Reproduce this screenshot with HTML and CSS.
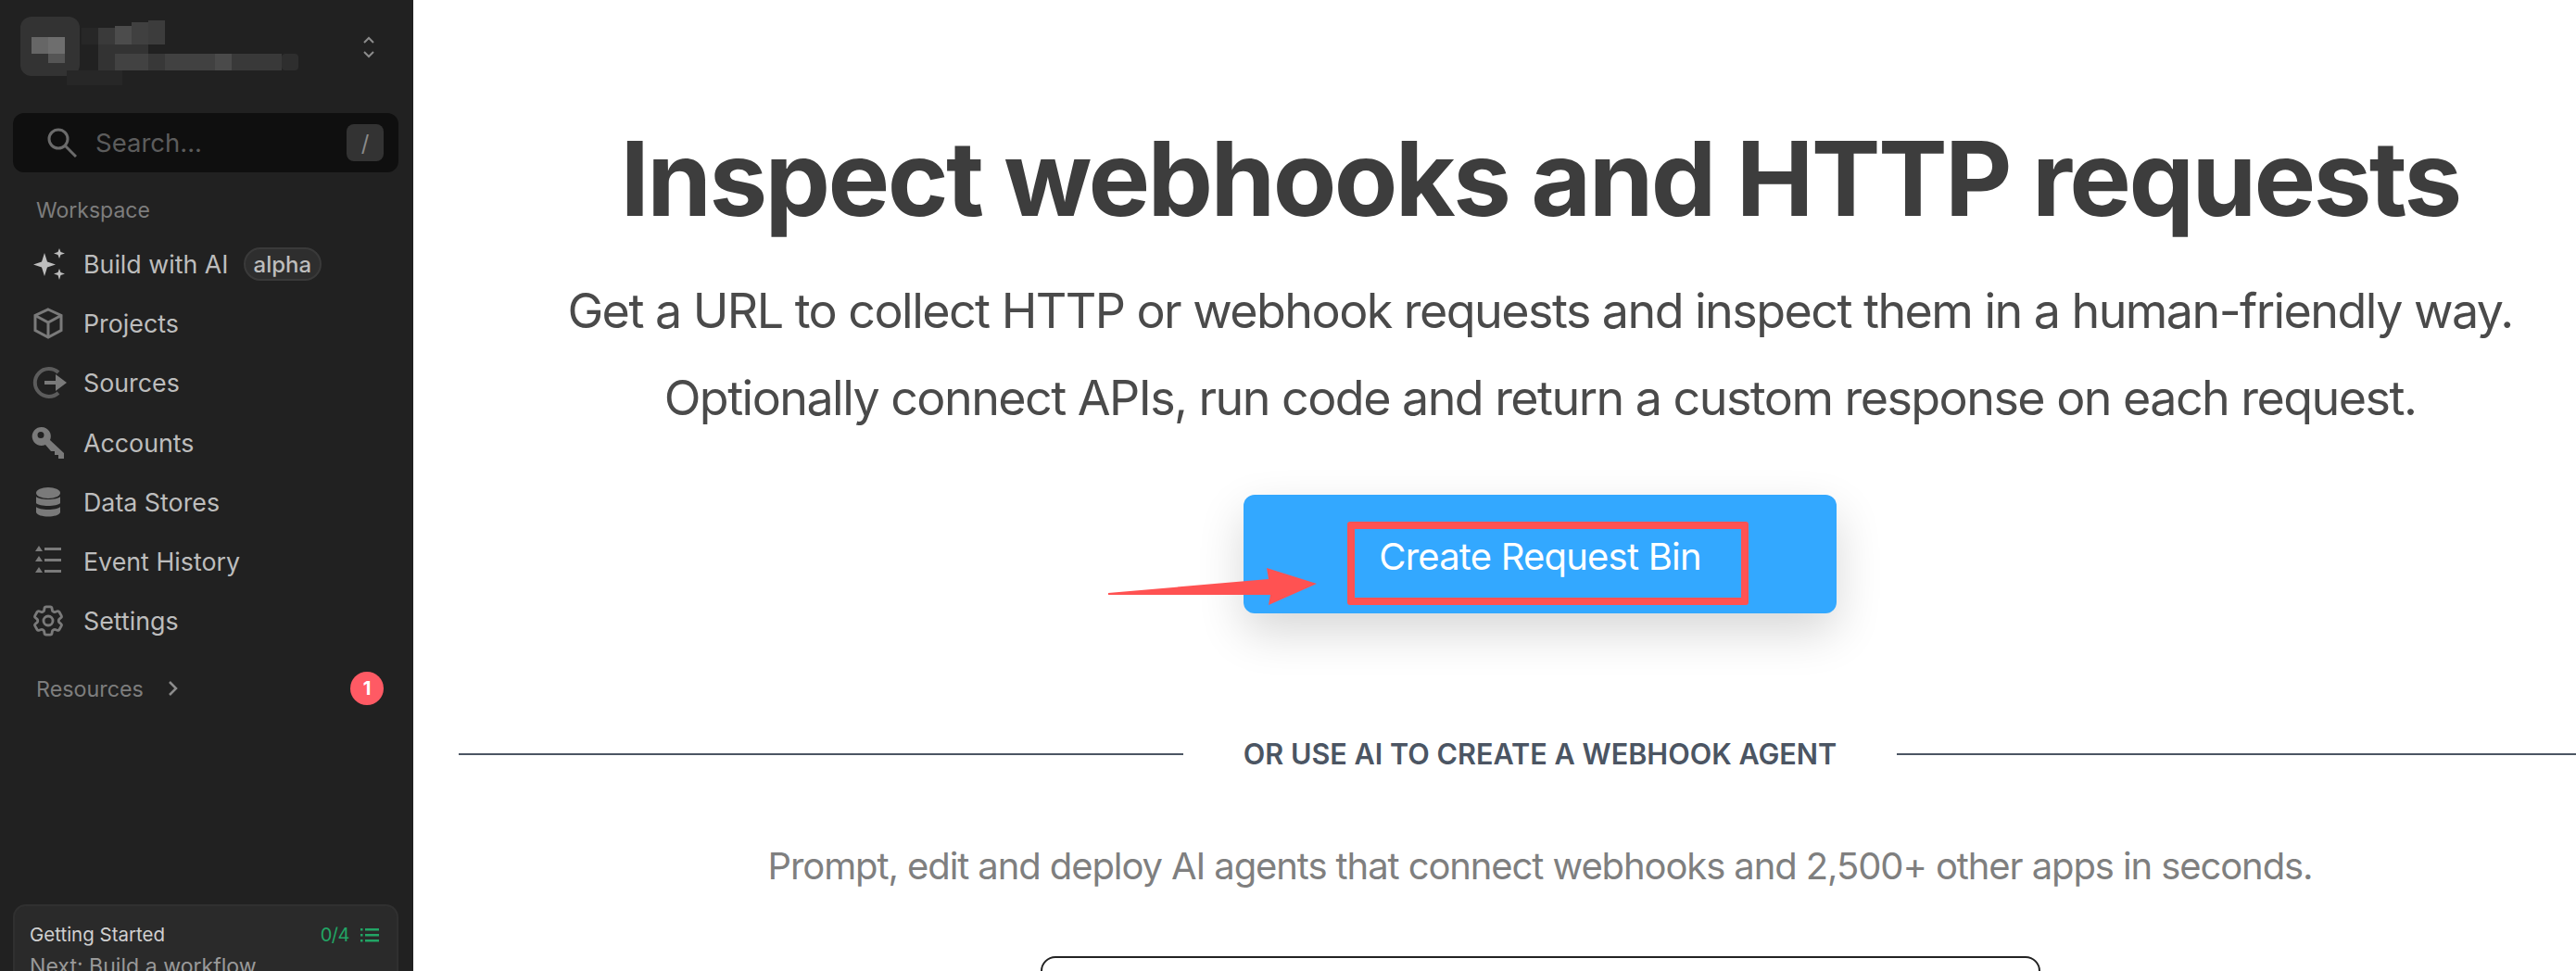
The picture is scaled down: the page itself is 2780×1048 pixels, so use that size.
FILE: index.html
```html
<!DOCTYPE html>
<html lang="en">
<head>
  <meta charset="UTF-8">
  <title>Inspect webhooks and HTTP requests</title>
  <link rel="stylesheet" href="styles.css">
</head>
<body>
  <div class="page">
    <aside class="sidebar">
      <div class="org">
        <svg class="org-mosaic" width="330" height="80" viewBox="0 0 330 80">
          <rect x="0" y="0" width="64" height="64" rx="12" fill="#333"/>
          <rect x="12" y="22" width="18" height="18" fill="#666"/>
          <rect x="30" y="22" width="18" height="18" fill="#6e6e6e"/>
          <rect x="30" y="40" width="18" height="10" fill="#555"/>
          <rect x="66" y="12" width="18" height="18" fill="#272727"/>
          <rect x="84" y="12" width="18" height="18" fill="#3a3a3a"/>
          <rect x="102" y="10" width="18" height="20" fill="#4c4c4c"/>
          <rect x="120" y="6" width="18" height="24" fill="#404040"/>
          <rect x="138" y="4" width="18" height="26" fill="#3c3c3c"/>
          <rect x="84" y="30" width="54" height="18" fill="#333"/>
          <rect x="84" y="40" width="18" height="18" fill="#333"/>
          <rect x="102" y="40" width="36" height="18" fill="#424242"/>
          <rect x="138" y="40" width="36" height="18" fill="#383838"/>
          <rect x="156" y="40" width="72" height="18" fill="#414141"/>
          <rect x="210" y="40" width="18" height="18" fill="#4a4a4a"/>
          <rect x="228" y="40" width="54" height="18" fill="#393939"/>
          <rect x="282" y="40" width="18" height="18" rx="4" fill="#2e2e2e"/>
          <rect x="50" y="58" width="60" height="16" fill="#272727"/>
        </svg>
        <svg class="org-arrows" width="14" height="24" viewBox="0 0 14 24" fill="none" stroke="#8c8c8c" stroke-width="2">
          <path d="M2 7l5-5 5 5M2 17l5 5 5-5"/>
        </svg>
      </div>

      <div class="search">
        <svg width="32" height="32" viewBox="0 0 32 32" fill="none" stroke="#6b6b6b" stroke-width="3">
          <circle cx="12" cy="12" r="10"/>
          <path d="M19 19l12 12"/>
        </svg>
        <span class="search-text">Search...</span>
        <span class="search-key">/</span>
      </div>

      <div class="section-label">Workspace</div>

      <nav class="nav">
        <div class="nav-item">
          <svg class="nav-icon" width="36" height="36" viewBox="0 0 36 36" fill="#bdbdbd">
            <path d="M14 6l3 9.500L26 18.500l-9 3L14 31l-3-9.500L2 18.500l9-3z"/>
            <path d="M30 1l1.500 4 4.500 1.500-4.500 1.500L30 12l-1.500-4L24 6.500 28.500 5z"/>
            <path d="M30 23l1.500 4 4.500 1.500-4.500 1.500L30 35l-1.500-5L24 28.500l4.500-1.500z"/>
          </svg>
          <span>Build with AI</span>
          <span class="alpha">alpha</span>
        </div>
        <div class="nav-item">
          <svg class="nav-icon" width="36" height="36" viewBox="0 0 36 36" fill="none" stroke="#7a7a7a" stroke-width="3">
            <path d="M18 3l14 6.500v16L18 33 4 25.500v-16z"/>
            <path d="M4 9.500L18 17l14-7.500M18 17v16"/>
          </svg>
          <span>Projects</span>
        </div>
        <div class="nav-item">
          <svg class="nav-icon" width="40" height="36" viewBox="0 0 40 36" fill="none" stroke="#5c5c5c" stroke-width="4">
            <path d="M29 7A15 15 0 1 0 29 29"/>
            <path d="M14 18h18" stroke="#7a7a7a"/>
            <path d="M26 9l12 9-12 9z" fill="#7a7a7a" stroke="none"/>
          </svg>
          <span>Sources</span>
        </div>
        <div class="nav-item">
          <svg class="nav-icon" width="36" height="36" viewBox="0 0 36 36" fill="#7a7a7a">
            <path d="M11 1a10 10 0 0 1 9 14l15 14v6h-6v-4h-4v-4h-4l-6-7A10 10 0 1 1 11 1zm-1 5a3.500 3.500 0 1 0 0 7 3.500 3.500 0 0 0 0-7z" fill-rule="evenodd"/>
          </svg>
          <span>Accounts</span>
        </div>
        <div class="nav-item">
          <svg class="nav-icon" width="36" height="36" viewBox="0 0 36 36" fill="#7a7a7a">
            <ellipse cx="18" cy="8" rx="13" ry="6"/>
            <path d="M5 12c3 4 23 4 26 0v7c-3 4-23 4-26 0z"/>
            <path d="M5 23c3 4 23 4 26 0v6c-2 6-24 6-26 0z"/>
          </svg>
          <span>Data Stores</span>
        </div>
        <div class="nav-item">
          <svg class="nav-icon" width="36" height="36" viewBox="0 0 36 36" fill="#7a7a7a">
            <path d="M8 1l4 6H4zM8 12l4 6H4zM8 24l4 6H4z"/>
            <path d="M14 3h18v3H14zM14 15h18v3H14zM14 27h18v3H14z"/>
          </svg>
          <span>Event History</span>
        </div>
        <div class="nav-item">
          <svg class="nav-icon" width="36" height="36" viewBox="1.250 1.250 21.500 21.500" fill="none" stroke="#7a7a7a" stroke-width="1.700">
            <path d="M9.594 3.940c.09-.542.56-.94 1.110-.94h2.593c.55 0 1.020.398 1.110.94l.213 1.281c.063.374.313.686.645.870.074.040.147.083.22.127.325.196.72.257 1.075.124l1.217-.456a1.125 1.125 0 0 1 1.370.49l1.296 2.247a1.125 1.125 0 0 1-.26 1.431l-1.003.827c-.293.241-.438.613-.43.992a7.723 7.723 0 0 1 0 .255c-.008.378.137.75.43.991l1.004.827c.424.35.534.955.26 1.430l-1.298 2.247a1.125 1.125 0 0 1-1.369.491l-1.217-.456c-.355-.133-.75-.072-1.076.124a6.470 6.470 0 0 1-.22.128c-.331.183-.581.495-.644.869l-.213 1.281c-.09.543-.56.94-1.110.94h-2.594c-.55 0-1.019-.398-1.110-.94l-.213-1.281c-.062-.374-.312-.686-.644-.87a6.520 6.520 0 0 1-.22-.127c-.325-.196-.72-.257-1.076-.124l-1.217.456a1.125 1.125 0 0 1-1.369-.49l-1.297-2.247a1.125 1.125 0 0 1 .26-1.431l1.004-.827c.292-.24.437-.613.43-.991a6.932 6.932 0 0 1 0-.255c.007-.38-.138-.751-.43-.992l-1.004-.827a1.125 1.125 0 0 1-.26-1.430l1.297-2.247a1.125 1.125 0 0 1 1.370-.491l1.216.456c.356.133.751.072 1.076-.124.072-.044.146-.086.22-.128.332-.183.582-.495.644-.869l.214-1.280z"/>
            <circle cx="12" cy="12" r="3"/>
          </svg>
          <span>Settings</span>
        </div>
      </nav>

      <div class="resources">
        <span class="resources-label">Resources</span>
        <svg width="12" height="18" viewBox="0 0 12 18" fill="none" stroke="#8c8c8c" stroke-width="2.500">
          <path d="M2 2l7 7-7 7"/>
        </svg>
        <span class="badge">1</span>
      </div>

      <div class="getting-started">
        <div class="gs-top">
          <span>Getting Started</span>
          <span class="gs-count">
            0/4
            <svg width="20" height="16" viewBox="0 0 20 16" fill="#22a565">
              <path d="M5 1h15v2.500H5zM5 7h15v2.500H5zM5 13h15v2.500H5z"/>
              <path d="M0 1h2.500v2.500H0zM0 7h2.500v2.500H0zM0 13h2.500v2.500H0z"/>
            </svg>
          </span>
        </div>
        <div class="gs-next">Next: Build a workflow</div>
      </div>
    </aside>

    <main class="main">
      <div class="content">
        <h1 class="title">Inspect webhooks and HTTP requests</h1>
        <p class="subtitle">Get a URL to collect HTTP or webhook requests and inspect them in a human-friendly way.</p>
        <p class="subtitle">Optionally connect APIs, run code and return a custom response on each request.</p>

        <div class="cta">
          <button class="create-btn">Create Request Bin</button>
          <div class="mark-box"></div>
          <svg class="mark-arrow" width="230" height="44" viewBox="0 0 230 44" fill="#ff5252">
            <path d="M0 30L173 15 171 3 225 20 173 43 175 32 0 32z"/>
          </svg>
        </div>

        <div class="divider">
          <span class="divider-text">OR USE AI TO CREATE A WEBHOOK AGENT</span>
        </div>

        <p class="prompt-note">Prompt, edit and deploy AI agents that connect webhooks and 2,500+ other apps in seconds.</p>

        <div class="prompt-box"></div>
      </div>
    </main>
  </div>
</body>
</html>
```

FILE: styles.css
```css
html, body {
  margin: 0;
  height: 100%;
  overflow: hidden;
}
body {
  font-family: Inter, "Liberation Sans", sans-serif;
  background-color: #fff;
}
.page {
  display: flex;
  height: 1048px;
}

/* sidebar */
.sidebar {
  width: 446px;
  flex: none;
  background-color: #212121;
  box-sizing: border-box;
  padding: 18px 16px 0 14px;
  overflow: hidden;
  display: flex;
  flex-direction: column;
}
.org {
  display: flex;
  align-items: flex-start;
  justify-content: space-between;
  height: 104px;
  padding: 0 25px 0 8px;
}
.org-arrows {
  margin-top: 21px;
}
.search {
  display: flex;
  align-items: center;
  height: 64px;
  flex: none;
  box-sizing: border-box;
  padding: 0 16px 0 37px;
  background-color: #0f0f0f;
  border-radius: 12px;
}
.search-text {
  margin-left: 20px;
  font-size: 27.500px;
  color: #5c5c5c;
  flex: 1;
}
.search-key {
  width: 40px;
  height: 40px;
  border-radius: 8px;
  background-color: #333;
  color: #8a8a8a;
  font-size: 24px;
  display: flex;
  align-items: center;
  justify-content: center;
}
.section-label {
  margin: 26px 0 0 25px;
  font-size: 23px;
  line-height: 30px;
  color: #7d7d7d;
}
.nav {
  margin-top: 11px;
  display: flex;
  flex-direction: column;
}
.nav-item {
  display: flex;
  align-items: center;
  height: 64.200px;
  flex: none;
  font-size: 26.800px;
  color: #bdbdbd;
  padding-left: 76px;
  position: relative;
}
.nav-icon {
  position: absolute;
  left: 20px;
  top: 14px;
}
.alpha {
  margin-left: 16px;
  height: 36px;
  box-sizing: border-box;
  padding: 0 9px;
  border: 2px solid #3a3a3a;
  background-color: #2e2e2e;
  border-radius: 18px;
  font-size: 24px;
  font-weight: 500;
  line-height: 33px;
}
.resources {
  display: flex;
  align-items: center;
  height: 40px;
  margin-top: 21px;
  padding: 0 16px 0 25px;
  flex: none;
}
.resources-label {
  font-size: 23.300px;
  color: #7d7d7d;
  margin-right: 26px;
}
.badge {
  margin-left: auto;
  width: 36px;
  height: 36px;
  border-radius: 50%;
  background-color: #ff5a64;
  color: #fff;
  font-size: 20px;
  font-weight: 700;
  display: flex;
  align-items: center;
  justify-content: center;
}
.getting-started {
  margin-top: auto;
  height: 72px;
  flex: none;
  box-sizing: border-box;
  padding: 14px 19px 0 16px;
  background-color: #2a2a2a;
  border: 2px solid #303030;
  border-bottom: none;
  border-radius: 14px 14px 0 0;
  font-size: 20.500px;
  line-height: 34px;
  overflow: hidden;
}
.gs-top {
  display: flex;
  justify-content: space-between;
  color: #d0d0d0;
}
.gs-count {
  display: flex;
  align-items: center;
  gap: 12px;
  font-size: 20px;
  letter-spacing: -0.500px;
  color: #22a565;
}
.gs-next {
  font-size: 23.100px;
  color: #999;
}

/* main */
.main {
  flex: 1;
  min-width: 0;
  overflow: hidden;
  padding-left: 49px;
}
.content {
  width: 2334px;
  display: flex;
  flex-direction: column;
  align-items: center;
}
.title {
  margin: 119px 0 0;
  font-size: 112px;
  line-height: 146px;
  font-weight: 700;
  letter-spacing: -2.600px;
  color: #3d3d3d;
}
.subtitle {
  margin: 0;
  font-size: 52px;
  line-height: 94px;
  letter-spacing: -1.550px;
  color: #4a4a4a;
}
.subtitle:first-of-type {
  margin-top: 24px;
}
.cta {
  position: relative;
  margin-top: 57px;
}
.create-btn {
  display: block;
  width: 640px;
  height: 128px;
  padding: 4px 0 0;
  border: none;
  border-radius: 12px;
  background-color: #33a8ff;
  color: #fff;
  font-family: inherit;
  font-size: 40px;
  letter-spacing: -0.800px;
  box-shadow: 0 20px 50px rgba(0, 0, 0, 0.16);
}
.mark-box {
  position: absolute;
  left: 112px;
  top: 29px;
  width: 433px;
  height: 90px;
  box-sizing: border-box;
  border: 8px solid #ff5252;
  border-radius: 3px;
}
.mark-arrow {
  position: absolute;
  left: -146px;
  top: 76px;
}
.divider {
  align-self: stretch;
  display: flex;
  align-items: center;
  gap: 65px;
  margin-top: 134px;
}
.divider::before,
.divider::after {
  content: "";
  flex: 1;
  height: 2px;
  background-color: #4b5563;
}
.divider-text {
  font-size: 30.600px;
  line-height: 36px;
  font-weight: 600;
  color: #4b5563;
}
.prompt-note {
  margin: 79px 0 0;
  font-size: 40px;
  line-height: 48px;
  letter-spacing: -1.100px;
  color: #7f7f7f;
}
.prompt-box {
  margin-top: 73px;
  width: 1079px;
  height: 120px;
  flex: none;
  box-sizing: border-box;
  border: 2px solid #222;
  border-radius: 16px;
}
```
